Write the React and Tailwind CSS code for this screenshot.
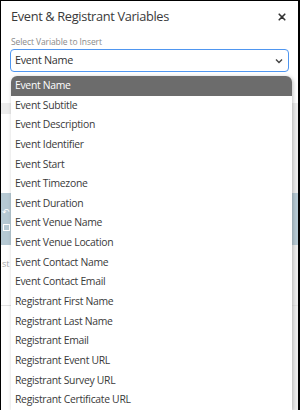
import React from 'react';

const variables = [
    'Event Name',
    'Event Subtitle',
    'Event Description',
    'Event Identifier',
    'Event Start',
    'Event Timezone',
    'Event Duration',
    'Event Venue Name',
    'Event Venue Location',
    'Event Contact Name',
    'Event Contact Email',
    'Registrant First Name',
    'Registrant Last Name',
    'Registrant Email',
    'Registrant Event URL',
    'Registrant Survey URL',
    'Registrant Certificate URL',
];

const App = () => {
    const selected = 'Event Name';

    return (
        <div className="relative w-[300px] h-[410px] overflow-hidden bg-white border-l border-t border-r-2 border-black font-['Open_Sans',sans-serif] text-[#333]">
            {/* Modal header */}
            <div className="flex items-center justify-between h-[30px] pl-[10px] pr-[12px] pt-[1px]">
                <h2 className="text-[12.8px] tracking-[-0.35px] text-[#3a3a3a]">Event &amp; Registrant Variables</h2>
                <svg width="8" height="8" viewBox="0 0 10 10" className="text-[#333]">
                    <path d="M1.5 1.5L8.5 8.5M8.5 1.5L1.5 8.5" stroke="currentColor" strokeWidth="2" strokeLinecap="round" />
                </svg>
            </div>

            {/* Select field */}
            <div className="px-[9px] pt-[5px]">
                <label className="block text-[8.5px] leading-[12px] tracking-[-0.1px] text-[#8a8a8a] pl-[1px]">Select Variable to Insert</label>
                <div className="mt-[1px] flex items-center justify-between h-[23px] rounded-[4px] border-[1.5px] border-[#4f96f0] pl-[4px] pr-[5px]">
                    <span className="text-[10.8px] tracking-[-0.3px]">{selected}</span>
                    <svg width="8" height="6" viewBox="0 0 8 6">
                        <path d="M1 1.5L4 4.5L7 1.5" fill="none" stroke="#444" strokeWidth="1.4" />
                    </svg>
                </div>
            </div>

            {/* Page content behind the open menu */}
            <div className="mt-[31px] h-[11px] bg-[#ececec]" />
            <div className="flex justify-end h-[79px]">
                <div className="w-[6px] bg-[#ececec]" />
            </div>
            <div className="flex h-[52px] bg-[#b6c9d3]">
                <div className="flex flex-col items-center justify-center gap-[8px] w-[10px] text-white">
                    <span className="text-[9px] leading-none">↶</span>
                    <span className="block w-[7px] h-[7px] border border-white" />
                </div>
            </div>
            <div className="flex justify-between h-[60px]">
                <span className="pt-[12px] pl-[1px] text-[9px] text-[#aaa]">st</span>
                <div className="w-[6px] bg-[#ececec]" />
            </div>
            <div className="flex justify-end h-[120px] border-t border-[#e2e2e2]">
                <div className="w-[6px] bg-[#ececec]" />
            </div>

            {/* Open dropdown menu */}
            <ul className="absolute top-[75px] left-[10px] w-[281px] bg-white rounded-t-[6px] overflow-hidden shadow-[1px_1px_4px_rgba(0,0,0,0.25)]">
                {variables.map((v) => (
                    <li
                        key={v}
                        className={`h-[19.65px] leading-[19.65px] pl-[4px] text-[10.4px] tracking-[-0.3px] ${v === selected ? 'bg-[#6c6c6c] text-white' : 'text-[#3a3a3a]'}`}
                    >
                        {v}
                    </li>
                ))}
            </ul>
        </div>
    );
};

export default App;
